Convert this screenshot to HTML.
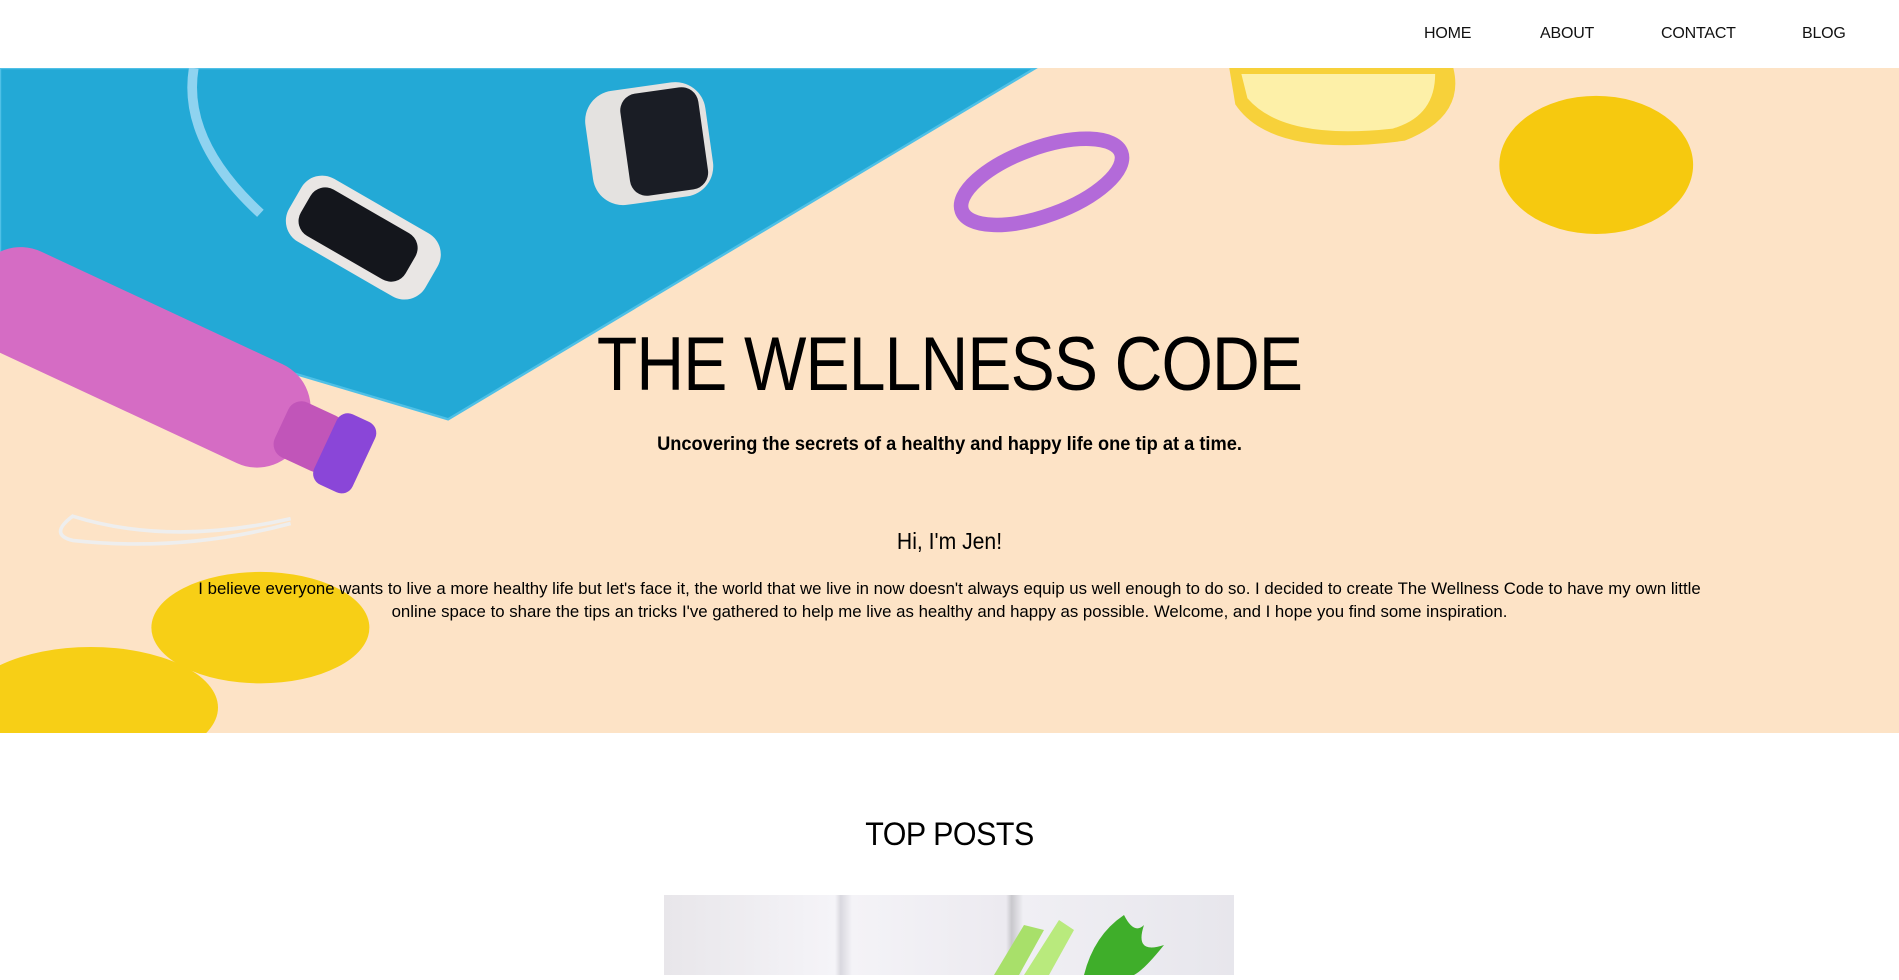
<!DOCTYPE html>
<html><head><meta charset="utf-8"><style>
*{margin:0;padding:0;box-sizing:border-box}
body{width:1899px;height:966px;overflow:hidden;background:#fff;font-family:"Liberation Sans",sans-serif;color:#000}
nav{height:68px;position:relative}
nav a{position:absolute;top:25px;font-size:16px;color:#111;text-decoration:none;letter-spacing:-0.2px}
.hero{position:relative;height:665px;background:#fde3c6;overflow:hidden}
.hero svg{position:absolute;left:0;top:0}
.t{position:absolute;left:0;width:1899px;text-align:center}
h1{font-weight:normal;font-size:76px;top:253px;letter-spacing:-1px;transform:scaleX(0.87)}
.sub{top:366px;font-size:19px;font-weight:bold;transform:scaleX(0.96)}
.hi{top:460px;font-size:23px;transform:scaleX(0.92)}
.p{top:509px;font-size:17px;line-height:23px;transform:scaleX(0.988)}
h2{position:absolute;top:816px;width:1899px;text-align:center;font-weight:normal;font-size:32px;letter-spacing:-0.5px;transform:scaleX(0.95)}
.img{position:absolute;left:664px;top:895px;width:570px;height:80px;background:linear-gradient(90deg,#e8e6ea,#f5f4f8 30%,#d9d8df 31%,#f4f3f7 33%,#eceaf0 60%,#c9c8cd 61%,#f0eff4 63%,#e7e6ec)}
</style></head><body>
<nav><a style="left:1424px">HOME</a><a style="left:1540px">ABOUT</a><a style="left:1661px">CONTACT</a><a style="left:1802px">BLOG</a></nav>
<div class="hero">
<svg width="1899" height="665" viewBox="0 0 1568 549" preserveAspectRatio="none">
<polygon points="0,0 855,0 370,290 0,180" fill="#23a9d6"/>
<polygon points="0,0 855,0 370,290 0,180" fill="none" stroke="#4fc0e6" stroke-width="2"/>
<path d="M160,0 Q150,60 215,120" stroke="#8fd3f0" stroke-width="8" fill="none"/>
<g transform="rotate(30 300 140)"><rect x="235" y="110" width="130" height="60" rx="20" fill="#e9e6e4"/><rect x="245" y="118" width="100" height="44" rx="14" fill="#14161c"/></g>
<g transform="rotate(-8 535 55)"><rect x="485" y="15" width="100" height="95" rx="25" fill="#e4e2e0"/><rect x="515" y="20" width="65" height="85" rx="14" fill="#1a1d25"/></g>
<g transform="rotate(25 160 260)"><rect x="-40" y="215" width="300" height="90" rx="40" fill="#d56cc4"/><rect x="240" y="235" width="50" height="50" rx="12" fill="#c155b9"/><rect x="280" y="228" width="35" height="64" rx="10" fill="#8a46d8"/></g>
<path d="M240,372 Q140,395 60,370 Q40,385 60,390 Q150,400 240,376" stroke="#eee" stroke-width="3" fill="none"/>
<ellipse cx="860" cy="94" rx="70" ry="28" transform="rotate(-20 860 94)" fill="none" stroke="#b36ad9" stroke-width="12"/>
<path d="M1015,0 L1200,0 Q1210,40 1160,60 Q1050,75 1020,30Z" fill="#f7d13a"/>
<path d="M1025,5 L1185,5 Q1185,40 1150,50 Q1060,60 1030,25Z" fill="#fdf0a8"/>
<ellipse cx="1318" cy="80" rx="80" ry="57" fill="#f6c90f"/>
<ellipse cx="215" cy="462" rx="90" ry="46" fill="#f7cf16"/>
<ellipse cx="75" cy="528" rx="105" ry="50" fill="#f7cf16"/>
</svg>
<h1 class="t">THE WELLNESS CODE</h1>
<div class="t sub">Uncovering the secrets of a healthy and happy life one tip at a time.</div>
<div class="t hi">Hi, I'm Jen!</div>
<div class="t p">I believe everyone wants to live a more healthy life but let's face it, the world that we live in now doesn't always equip us well enough to do so. I decided to create The Wellness Code to have my own little<br>online space to share the tips an tricks I've gathered to help me live as healthy and happy as possible. Welcome, and I hope you find some inspiration.</div>
</div>
<h2>TOP POSTS</h2>
<div class="img"><svg width="570" height="80"><path d="M330,80 L360,30 L380,35 L355,80Z" fill="#a8e06a"/><path d="M360,80 L395,25 L410,35 L385,80Z" fill="#b9ea7d"/><path d="M420,80 Q430,40 460,20 Q470,40 480,30 Q470,60 500,50 Q480,75 470,80Z" fill="#3fae2a"/></svg></div>
</body></html>
